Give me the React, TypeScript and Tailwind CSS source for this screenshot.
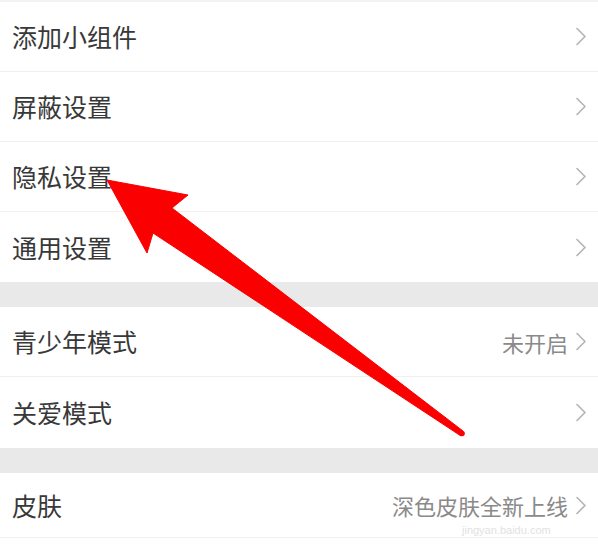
import React from "react";

const Chevron = () => (
  <svg width="12" height="19" viewBox="0 0 12 19" className="shrink-0">
    <path d="M2 1.5 L10 9.5 L2 17.5" fill="none" stroke="#b3b3b3" strokeWidth="1.6" strokeLinecap="round" strokeLinejoin="round" />
  </svg>
);

type RowProps = { label: string; value?: string; last?: boolean; h: string };

const Row = ({ label, value, last, h }: RowProps) => (
  <div className={`flex items-center justify-between pl-[12px] pr-[11px] bg-white ${h} ${last ? "" : "border-b border-[#f0f0f0]"}`}>
    <span className="text-[25px] leading-none text-[#383838]">{label}</span>
    <div className="flex items-center gap-[7px]">
      {value && <span className="text-[22px] leading-none text-[#8a8a8a]">{value}</span>}
      <Chevron />
    </div>
  </div>
);

export default function App() {
  return (
    <div
      className="relative w-[598px] h-[554px] overflow-hidden bg-white"
      style={{ fontFamily: '"Noto Sans CJK SC", "Noto Sans", sans-serif' }}
    >
      <div className="h-[2px] bg-[#f2f2f2]" />
      <div className="flex flex-col">
        <Row label="添加小组件" h="h-[70px]" />
        <Row label="屏蔽设置" h="h-[70px]" />
        <Row label="隐私设置" h="h-[70px]" />
        <Row label="通用设置" h="h-[70px]" last />
      </div>
      <div className="h-[25px] bg-[#e9e9e9]" />
      <div className="flex flex-col">
        <Row label="青少年模式" value="未开启" h="h-[70px]" />
        <Row label="关爱模式" h="h-[71px]" last />
      </div>
      <div className="h-[25px] bg-[#e9e9e9]" />
      <div className="flex flex-col">
        <Row label="皮肤" value="深色皮肤全新上线" h="h-[65px]" />
      </div>
      <div className="h-[16px] bg-white" />

      <div className="absolute left-[462px] top-[525px] text-[11px] leading-none text-[#e2e2e2]" style={{ fontFamily: '"Liberation Sans", sans-serif' }}>
        jingyan.baidu.com
      </div>

      <svg className="absolute left-0 top-0" width="598" height="554" viewBox="0 0 598 554">
        <polygon
          points="107,180 188,195 172,208 463,431 461,436 153,233 147,253"
          fill="#fa0000"
          stroke="#fa0000"
          strokeWidth="1"
          strokeLinejoin="round"
        />
        <circle cx="462" cy="433.5" r="2.8" fill="#fa0000" />
      </svg>
    </div>
  );
}
